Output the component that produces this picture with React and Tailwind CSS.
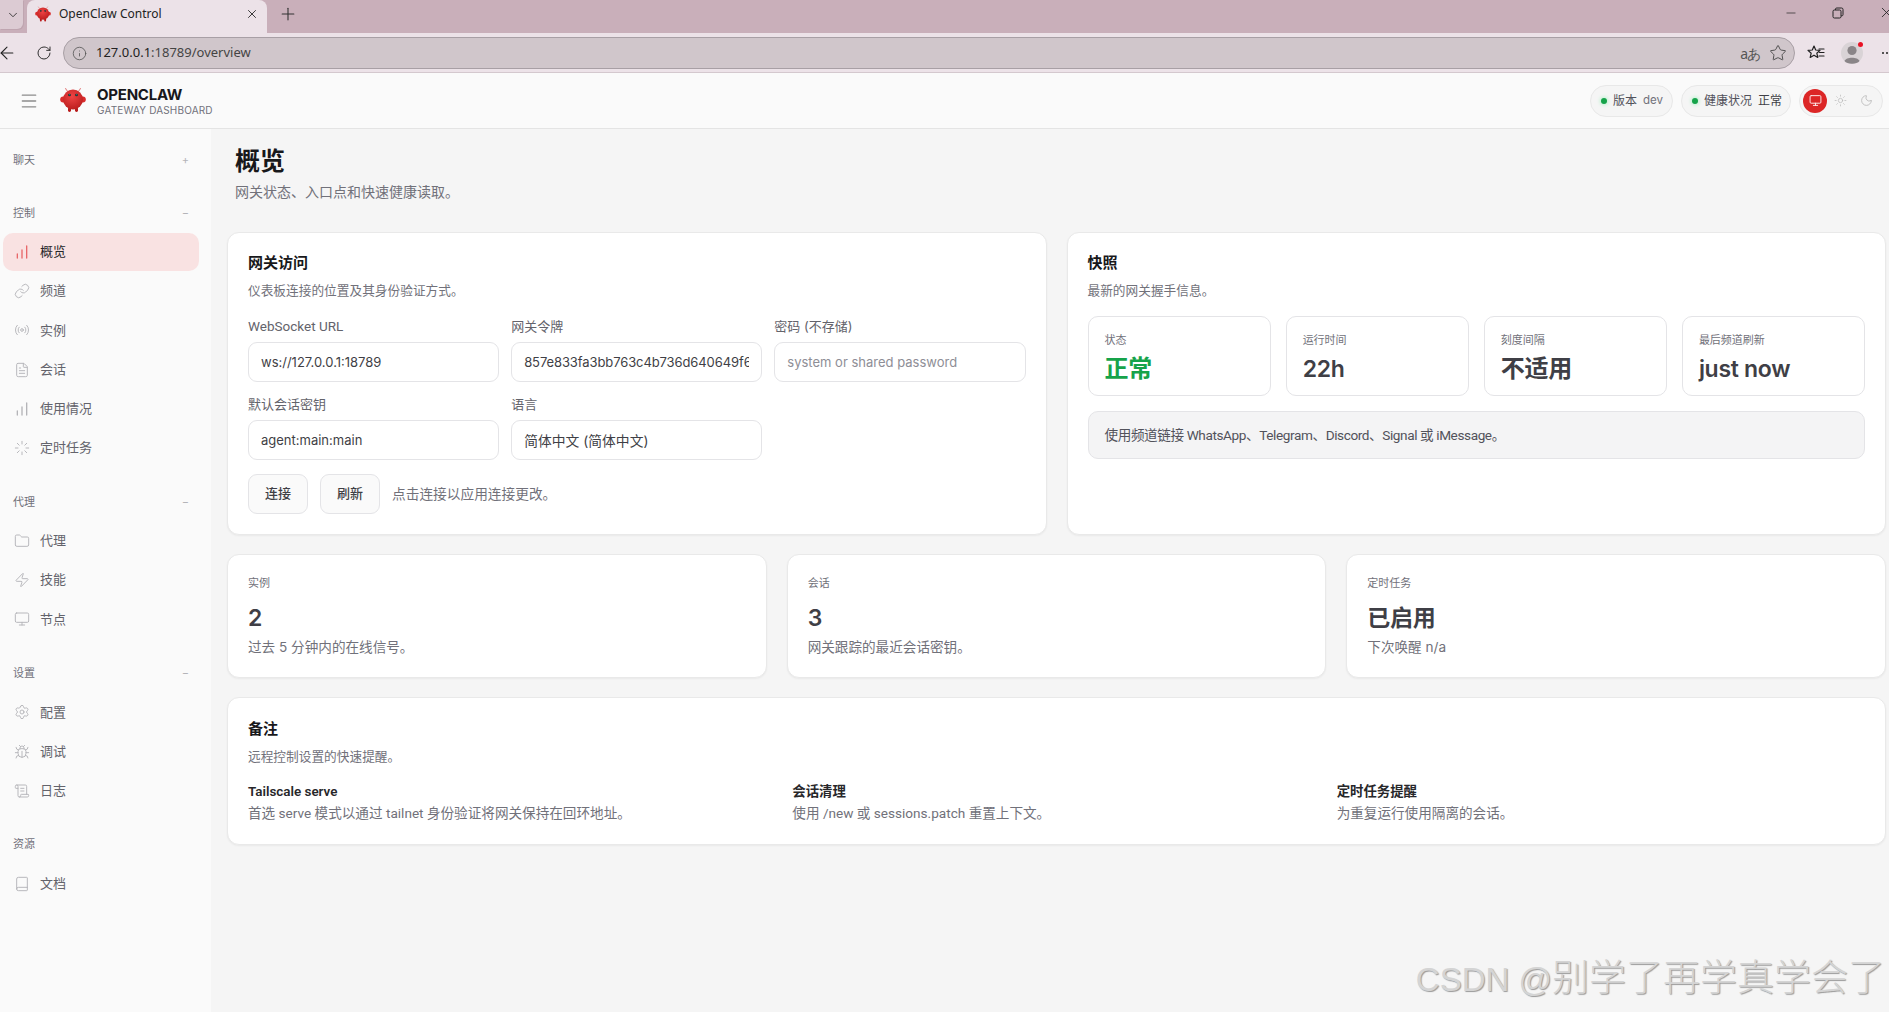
import React from "react";
import {
  ChartNoAxesColumnIncreasing, Link, Radio, FileText, Loader, Folder, Zap, Monitor, Settings, Bug, ScrollText, Book,
  Menu, Sun, Moon, Info, RotateCw, ArrowLeft, X, Plus, ChevronDown, Star, Minus,
} from "lucide-react";

function Logo({ size = 26 }) {
  return (
    <svg width={size} height={size} viewBox="0 0 26 26" className="shrink-0">
      <defs>
        <radialGradient id={`lg${size}`} cx="45%" cy="35%" r="70%">
          <stop offset="0%" stopColor="#ef4444" />
          <stop offset="100%" stopColor="#b91c1c" />
        </radialGradient>
      </defs>
      <path d="M8 5 L5.5 1.5 M18 5 L20.5 1.5" stroke="#e58a8a" strokeWidth="1.1" fill="none" strokeLinecap="round" />
      <ellipse cx="3.2" cy="12.5" rx="3" ry="3" fill="#d92c2c" />
      <ellipse cx="22.8" cy="12.5" rx="3" ry="3" fill="#d92c2c" />
      <rect x="8" y="20" width="3" height="5" rx="1.4" fill="#b91c1c" />
      <rect x="15" y="20" width="3" height="5" rx="1.4" fill="#b91c1c" />
      <circle cx="13" cy="12.5" r="10" fill={`url(#lg${size})`} />
      <circle cx="9.5" cy="8" r="1.3" fill="#0f2a2e" />
      <circle cx="16.5" cy="8" r="1.3" fill="#0f2a2e" />
      <circle cx="9.7" cy="7.8" r="0.5" fill="#2dd4bf" />
      <circle cx="16.7" cy="7.8" r="0.5" fill="#2dd4bf" />
    </svg>
  );
}

function FavoritesIcon() {
  return (
    <svg width="18" height="18" viewBox="0 0 18 18" fill="none" stroke="#1f1f1f" strokeWidth="1.2" strokeLinejoin="round" strokeLinecap="round">
      <path d="M7 2 L8.7 6 L13 6.4 L9.8 9.2 L10.8 13.4 L7 11.2 L3.2 13.4 L4.2 9.2 L1 6.4 L5.3 6 Z" />
      <path d="M12 5 H17 M12.5 8.5 H17 M12 12 H17" />
    </svg>
  );
}

function Avatar() {
  return (
    <div className="relative w-[22px] h-[22px]">
      <svg width="22" height="22" viewBox="0 0 22 22">
        <circle cx="11" cy="11" r="11" fill="#d9d3d6" />
        <circle cx="11" cy="8.5" r="4.6" fill="#8a8588" />
        <path d="M3.5 19 C5 14.5 17 14.5 18.5 19 C16 22.5 6 22.5 3.5 19 Z" fill="#8a8588" />
      </svg>
      <span className="absolute top-0 right-0 w-[5px] h-[5px] rounded-full bg-[#e81123]" />
    </div>
  );
}

function BrowserChrome() {
  return (
    <div className="[font-family:'Noto_Sans',sans-serif] shrink-0">
      <div className="h-[33px] bg-[#c9afba] flex">
        <div className="w-[23px] h-[29px] rounded-br-md bg-[#dccbd3] shadow-[1px_1px_0_#bfa5b0] flex items-center justify-end pr-[3px]">
          <ChevronDown size={14} strokeWidth={1.4} className="text-[#222]" />
        </div>
        <div className="ml-1 w-[240px] h-[33px] rounded-t-lg bg-[#ece2e8] flex items-center pl-2 pr-[8px] pb-[6px]">
          <Logo size={16} />
          <span className="ml-[8px] text-[12px] text-[#222]">OpenClaw Control</span>
          <X size={14} strokeWidth={1.5} className="ml-auto text-[#222]" />
        </div>
        <div className="ml-[11px] h-[27px] flex items-center">
          <Plus size={20} strokeWidth={1.3} className="text-[#333]" />
        </div>
        <div className="ml-auto h-[25px] flex items-center gap-[34px] -mr-[6px]">
          <Minus size={14} strokeWidth={1.2} className="text-[#222]" />
          <svg width="12" height="12" viewBox="0 0 12 12" fill="none" stroke="#222" strokeWidth="1">
            <rect x="1" y="3" width="8" height="8" rx="1.4" />
            <path d="M3.5 3 V2.2 A1.2 1.2 0 0 1 4.7 1 H9.5 A1.5 1.5 0 0 1 11 2.5 V7.3 A1.2 1.2 0 0 1 9 8.5" />
          </svg>
          <X size={17} strokeWidth={1.2} className="text-[#222]" />
        </div>
      </div>
      <div className="h-[40px] pt-[1px] bg-[#ece2e8] border-b border-[#d4c8ce] flex items-center">
        <ArrowLeft size={20} strokeWidth={1.3} className="shrink-0 -ml-[3px] text-[#222]" />
        <RotateCw size={16} strokeWidth={1.4} className="shrink-0 ml-[19px] text-[#222]" />
        <div className="shrink-0 ml-[11px] w-[1732px] h-[32px] rounded-full bg-[#d0c6cb] border border-[#a89fa5] flex items-center pl-[8px] pr-[7px]">
          <Info size={15} strokeWidth={1.3} className="text-[#555]" />
          <span className="ml-[9px] text-[13px] text-[#444]"><span className="text-[#222]">127.0.0.1</span>:18789/overview</span>
          <span className="ml-auto text-[14px] text-[#555] tracking-[-1px]">aあ</span>
          <Star size={18} strokeWidth={1.2} className="ml-[9px] text-[#444]" />
        </div>
        <div className="shrink-0 ml-[12px]"><FavoritesIcon /></div>
        <div className="shrink-0 ml-[16px]"><Avatar /></div>
        <div className="shrink-0 ml-[19px] flex gap-[2px]">
          <span className="w-[2px] h-[2px] rounded-full bg-[#222]" />
          <span className="w-[2px] h-[2px] rounded-full bg-[#222]" />
          <span className="w-[2px] h-[2px] rounded-full bg-[#222]" />
        </div>
      </div>
    </div>
  );
}

function Pill({ label, value, valueClass, className }) {
  return (
    <div className={`h-[32px] pl-[10px] shrink-0 rounded-full border border-[#e8e8e8] bg-[#f5f5f5] flex items-center whitespace-nowrap ${className}`}>
      <span className="shrink-0 w-[6px] h-[6px] rounded-full bg-[#16a34a] shadow-[0_0_4px_#86efac]" />
      <span className="ml-[6px] text-[12px] text-[#52525b]">{label}</span>
      <span className={`ml-[6px] ${valueClass}`}>{value}</span>
    </div>
  );
}

function Header() {
  return (
    <header className="h-[56px] shrink-0 bg-[#fafafa] border-b border-[#e4e4e4] flex items-center">
      <Menu size={20} strokeWidth={1.6} className="ml-[19px] text-[#8c8c8c]" />
      <div className="ml-[21px] mt-[-1px]"><Logo size={26} /></div>
      <div className="ml-[11px] pt-[1px] flex flex-col">
        <span className="text-[15px] leading-[18px] font-bold text-[#18181b] tracking-[-0.25px]">OPENCLAW</span>
        <span className="text-[10px] leading-[12px] text-[#71717a] tracking-[0.17px]">GATEWAY DASHBOARD</span>
      </div>
      <div className="ml-auto flex items-center gap-[8px] pr-[6px]">
        <Pill label="版本" value="dev" valueClass="text-[11.5px] text-[#71717a]" className="w-[83px]" />
        <Pill label="健康状况" value="正常" valueClass="text-[12px] text-[#3f3f46]" className="w-[110px]" />
        <div className="h-[32px] w-[84px] rounded-full border border-[#e8e8e8] bg-[#f5f5f5] flex items-center pl-[3px]">
          <span className="w-[24px] h-[24px] rounded-full bg-[#dc2626] flex items-center justify-center">
            <Monitor size={13} strokeWidth={1.8} className="text-[#fde8e8]" />
          </span>
          <Sun size={13} strokeWidth={1.3} className="ml-[7px] text-[#b8b8b8]" />
          <Moon size={13} strokeWidth={1.5} className="ml-[13px] text-[#b8b8b8]" />
        </div>
      </div>
    </header>
  );
}

function NavItem({ icon: Icon, label, active, sw = 1.4 }) {
  return (
    <div className={`h-[38px] w-[196px] rounded-[10px] pl-[11px] flex items-center gap-[10px] ${active ? "bg-[#f9e2e2]" : ""}`}>
      <Icon size={16} strokeWidth={sw} className={active ? "text-[#e8686a]" : "text-[#b4b4b8]"} />
      <span className={`text-[13px] ${active ? "text-[#27272a]" : "text-[#63636b]"}`}>{label}</span>
    </div>
  );
}

function NavGroup({ title, sign, items, className = "" }) {
  return (
    <div className={className}>
      <div className="h-5 w-[196px] pl-[10px] pr-[10px] flex items-center justify-between">
        <span className="text-[11px] text-[#71717a]">{title}</span>
        {sign && <span className="text-[11px] text-[#b4b4b8]">{sign}</span>}
      </div>
      {items && (
        <div className="mt-[10px] flex flex-col gap-[1.2px]">
          {items.map((it) => <NavItem key={it.label} {...it} />)}
        </div>
      )}
    </div>
  );
}

function Sidebar() {
  return (
    <aside className="w-[211px] shrink-0 bg-[#fafafa] pl-[3px] pt-[21px] flex flex-col gap-[25px]">
      <NavGroup title="聊天" sign="+" className="pb-[8px]" />
      <NavGroup title="控制" sign="−" items={[
        { icon: ChartNoAxesColumnIncreasing, label: "概览", active: true, sw: 2 },
        { icon: Link, label: "频道" },
        { icon: Radio, label: "实例" },
        { icon: FileText, label: "会话" },
        { icon: ChartNoAxesColumnIncreasing, label: "使用情况", sw: 2 },
        { icon: Loader, label: "定时任务" },
      ]} />
      <NavGroup title="代理" sign="−" items={[
        { icon: Folder, label: "代理" },
        { icon: Zap, label: "技能" },
        { icon: Monitor, label: "节点" },
      ]} />
      <NavGroup title="设置" sign="−" items={[
        { icon: Settings, label: "配置" },
        { icon: Bug, label: "调试" },
        { icon: ScrollText, label: "日志" },
      ]} />
      <NavGroup title="资源" items={[{ icon: Book, label: "文档" }]} />
    </aside>
  );
}

function Card({ children, className = "" }) {
  return (
    <section className={`bg-white rounded-[12px] border border-[#e9e9e9] shadow-[0_1px_2px_rgba(0,0,0,0.05)] ${className}`}>
      {children}
    </section>
  );
}

function CardHead({ title, desc }) {
  return (
    <>
      <h2 className="text-[15px] leading-5 font-semibold text-[#18181b]">{title}</h2>
      <p className="mt-2 text-[12.7px] leading-5 text-[#71717a]">{desc}</p>
    </>
  );
}

function Field({ label, value, placeholder, labelClass = "text-[13px]", inputClass = "text-[13px]" }) {
  return (
    <label className="flex flex-col gap-[7px] min-w-0">
      <span className={`leading-[18px] text-[#63636b] ${labelClass}`}>{label}</span>
      <input
        readOnly
        value={value}
        placeholder={placeholder}
        className={`w-full h-[40px] px-3 rounded-[9px] border border-[#e4e4e7] bg-white text-[#3f3f46] placeholder:text-[#8e8e96] outline-none ${inputClass}`}
      />
    </label>
  );
}

function GatewayCard() {
  return (
    <Card className="px-5 pt-5 pb-5">
      <CardHead title="网关访问" desc="仪表板连接的位置及其身份验证方式。" />
      <div className="mt-4 grid grid-cols-3 gap-x-3 gap-y-[13px]">
        <Field label="WebSocket URL" value="ws://127.0.0.1:18789" labelClass="[font-family:Roboto,'Noto_Sans_CJK_SC',sans-serif] text-[13.5px]" />
        <Field label="网关令牌" value="857e833fa3bb763c4b736d640649f64a1c7e9d02b85f3a61" inputClass="text-[13px] tracking-[-0.1px]" />
        <Field label="密码 (不存储)" value="" placeholder="system or shared password" />
        <Field label="默认会话密钥" value="agent:main:main" />
        <Field label="语言" value="简体中文 (简体中文)" inputClass="text-[13.8px]" />
      </div>
      <div className="mt-[14px] flex items-center gap-3">
        <button className="h-[40px] w-[60px] rounded-[9px] border border-[#e4e4e7] bg-[#fafafa] text-[13px] font-medium text-[#3f3f46]">连接</button>
        <button className="h-[40px] w-[60px] rounded-[9px] border border-[#e4e4e7] bg-[#fafafa] text-[13px] font-medium text-[#3f3f46]">刷新</button>
        <span className="text-[13.7px] text-[#71717a]">点击连接以应用连接更改。</span>
      </div>
    </Card>
  );
}

function Stat({ label, value, valueClass = "text-[#3f3f46]", sizeClass = "text-[23px]" }) {
  return (
    <div className="h-[80px] rounded-[10px] border border-[#e4e4e7] px-[16px] pt-[14px]">
      <div className="text-[11px] leading-[18px] text-[#71717a]">{label}</div>
      <div className={`leading-[32px] mt-[4px] font-semibold tracking-[-0.3px] ${sizeClass} ${valueClass}`}>{value}</div>
    </div>
  );
}

function SnapshotCard() {
  return (
    <Card className="px-5 pt-5 pb-5">
      <CardHead title="快照" desc="最新的网关握手信息。" />
      <div className="mt-[15px] grid grid-cols-4 gap-[15px]">
        <Stat label="状态" value="正常" valueClass="text-[#16a34a]" sizeClass="text-[24px]" />
        <Stat label="运行时间" value="22h" />
        <Stat label="刻度间隔" value="不适用" sizeClass="text-[24px]" />
        <Stat label="最后频道刷新" value="just now" />
      </div>
      <div className="mt-[15px] h-[48px] rounded-[10px] border border-[#e4e4e7] bg-[#f4f4f5] px-[16px] flex items-center text-[13.6px] tracking-[-0.4px] text-[#52525b] [font-family:Roboto,'Noto_Sans_CJK_SC',sans-serif]">
        使用频道链接 WhatsApp、Telegram、Discord、Signal 或 iMessage。
      </div>
    </Card>
  );
}

function Metric({ label, value, desc }) {
  return (
    <Card className="h-[124px] px-5 pt-[19px]">
      <div className="text-[11px] leading-[18px] text-[#71717a]">{label}</div>
      <div className="mt-[10px] text-[23px] leading-[32px] font-semibold tracking-[-0.3px] text-[#3f3f46]">{value}</div>
      <div className="mt-[3px] text-[13.6px] leading-5 text-[#71717a]">{desc}</div>
    </Card>
  );
}

function Note({ title, desc }) {
  return (
    <div className="[font-family:Roboto,'Noto_Sans_CJK_SC',sans-serif]">
      <div className="text-[13.4px] leading-5 font-semibold text-[#27272a]">{title}</div>
      <div className="mt-[1px] text-[13.6px] leading-5 text-[#71717a]">{desc}</div>
    </div>
  );
}

function Main() {
  return (
    <main className="flex-1 min-w-0 bg-[#f5f5f5] pl-[16px] pr-[3px] pt-[16px]">
      <h1 className="pl-[8px] text-[25px] leading-[32px] font-bold text-[#18181b]">概览</h1>
      <p className="pl-[8px] mt-[5px] text-[14px] leading-5 text-[#71717a]">网关状态、入口点和快速健康读取。</p>
      <div className="mt-[30px] grid grid-cols-2 gap-5">
        <GatewayCard />
        <SnapshotCard />
      </div>
      <div className="mt-[19px] grid grid-cols-3 gap-5">
        <Metric label="实例" value="2" desc="过去 5 分钟内的在线信号。" />
        <Metric label="会话" value="3" desc="网关跟踪的最近会话密钥。" />
        <Metric label="定时任务" value="已启用" desc="下次唤醒 n/a" />
      </div>
      <Card className="mt-[19px] h-[148px] px-5 pt-[21px]">
        <CardHead title="备注" desc="远程控制设置的快速提醒。" />
        <div className="mt-[15px] grid grid-cols-3 gap-4">
          <Note title="Tailscale serve" desc="首选 serve 模式以通过 tailnet 身份验证将网关保持在回环地址。" />
          <Note title="会话清理" desc="使用 /new 或 sessions.patch 重置上下文。" />
          <Note title="定时任务提醒" desc="为重复运行使用隔离的会话。" />
        </div>
      </Card>
    </main>
  );
}

export default function App() {
  return (
    <div className="relative w-[1889px] h-[1012px] overflow-hidden flex flex-col [font-family:Inter,'Noto_Sans_CJK_SC',sans-serif] bg-[#f5f5f5]">
      <BrowserChrome />
      <Header />
      <div className="flex-1 min-h-0 flex">
        <Sidebar />
        <Main />
      </div>
      <div className="absolute right-[4px] bottom-[10px] text-[37px] leading-[44px] font-light text-[#d4d4d4] whitespace-nowrap [font-family:'Liberation_Sans','Noto_Sans_CJK_SC',sans-serif] [text-shadow:1px_1px_1px_#9a9a9a]">
        <span className="text-[33px]">CSDN @</span>别学了再学真学会了
      </div>
    </div>
  );
}
